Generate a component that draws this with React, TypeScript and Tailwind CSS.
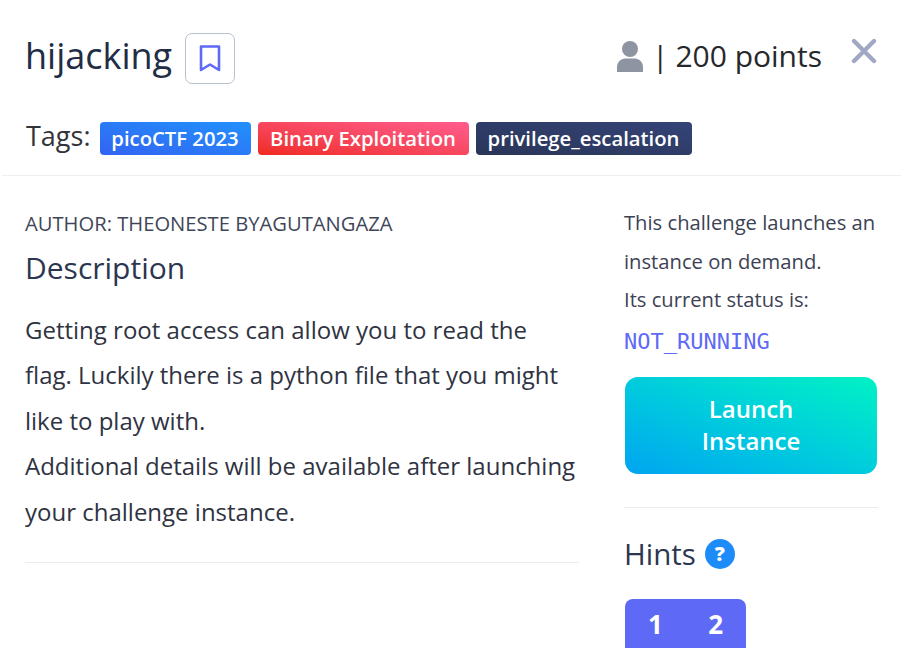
import React from "react";

export default function App() {
  return (
    <div className="h-[648px] w-[906px] overflow-hidden bg-white font-['Open_Sans',sans-serif] text-[#32325d]">
      <div className="ml-[2px] w-[899px]">
        <header className="h-[176px] border-b border-[#eeeff2] pl-[23px] pr-[24px]">
          <div className="flex h-[122px] items-start justify-between">
            <div className="mt-[33px] flex items-start">
              <h1 className="text-[36px] leading-[46px] font-normal text-[#212d45]">hijacking</h1>
              <button className="ml-[13px] flex h-[51px] w-[50px] items-center justify-center rounded-[7px] border border-[#b8bfcd] bg-white">
                <svg width="22" height="29" viewBox="0 0 22 29" fill="none" stroke="#5e6af5" strokeWidth="2.6" strokeLinejoin="round">
                  <path d="M2 2.5H20V26L11 20.5L2 26Z" />
                </svg>
              </button>
            </div>
            <div className="flex items-start">
              <div className="mt-[33px] flex items-center text-[30px] leading-[46px] text-[#26282c]">
                <svg width="28" height="31" viewBox="0 0 28 31" fill="#8f94a3" className="mr-[8px]">
                  <circle cx="14" cy="8" r="8" />
                  <path d="M1 31V26C1 20 6 17.5 10 17.5H18C22 17.5 27 20 27 26V31Z" />
                </svg>
                <span className="mr-[-1px]">|&nbsp;</span>
                <span>200 points</span>
              </div>
              <svg width="26" height="26" viewBox="0 0 26 26" className="ml-[29px] mt-[38px]" stroke="#a0a8c4" strokeWidth="4.4" strokeLinecap="round">
                <path d="M3 3L23 23M23 3L3 23" />
              </svg>
            </div>
          </div>
          <div className="flex items-start">
            <span className="ml-[1px] mr-[9px] mt-[1px] text-[27px] leading-[26px] text-[#32343a]">Tags:</span>
            <Tag className="w-[151px] bg-gradient-to-tr from-[#3263f2] to-[#2091fb]">picoCTF 2023</Tag>
            <Tag className="ml-[7px] w-[211px] bg-gradient-to-tr from-[#f0291c] to-[#ff5c8e]">Binary Exploitation</Tag>
            <Tag className="ml-[7px] w-[216px] bg-gradient-to-tr from-[#2a3557] to-[#344478]">privilege_escalation</Tag>
          </div>
        </header>
        <main className="flex pl-[23px]">
          <section className="w-[554px] shrink-0">
            <p className="mt-[34px] text-[20.2px] leading-[26px] text-[#3f4659]">AUTHOR: THEONESTE BYAGUTANGAZA</p>
            <h2 className="mt-[12px] text-[30px] leading-[40px] font-normal text-[#2b3650]">Description</h2>
            <p className="mt-[18.5px] border-b border-[#e9ebee] pb-[27.5px] text-[24px] leading-[45.5px] text-[#2f3342]">
              Getting root access can allow you to read the
              <br />
              flag. Luckily there is a python file that you might
              <br />
              like to play with.
              <br />
              Additional details will be available after launching
              <br />
              your challenge instance.
            </p>
          </section>
          <aside className="ml-[45px] w-[254px] shrink-0">
            <p className="mt-[27px] text-[20.2px] leading-[38.5px] text-[#3c4254]">
              This challenge launches an
              <br />
              instance on demand.
              <br />
              Its current status is:
            </p>
            <p className="mt-[4px] font-['DejaVu_Sans_Mono',monospace] text-[22px] leading-[38px] text-[#5e6af5]">NOT_RUNNING</p>
            <button className="ml-[1px] mt-[16.5px] h-[97px] w-[252px] rounded-[13px] bg-gradient-to-tr from-[#00a4f0] to-[#00f2c3] pb-[2px] text-[24px] leading-[32px] font-semibold text-white">
              Launch
              <br />
              Instance
            </button>
            <div className="mt-[33px] border-t border-[#e9ebee] pt-[26px]">
              <div className="flex items-center">
                <h2 className="text-[29.5px] leading-[40px] font-normal text-[#2b3650]">Hints</h2>
                <span className="ml-[9px] flex h-[30px] w-[30px] items-center justify-center rounded-full bg-[#1d8cf8] text-[20px] leading-none font-extrabold text-white">?</span>
              </div>
              <div className="ml-[1px] mt-[25px] flex h-[60px] w-[121px] justify-between rounded-[8px] bg-[#5e6af5] pl-[23px] pr-[23px] pt-[7px] text-[26px] leading-[36px] font-bold text-white">
                <span>1</span>
                <span>2</span>
              </div>
            </div>
          </aside>
        </main>
      </div>
    </div>
  );
}

function Tag({ className, children }: { className: string; children: React.ReactNode }) {
  return (
    <span className={"flex h-[33px] items-center justify-center rounded-[4px] text-[20.25px] leading-[33px] font-semibold text-white " + className}>
      {children}
    </span>
  );
}
